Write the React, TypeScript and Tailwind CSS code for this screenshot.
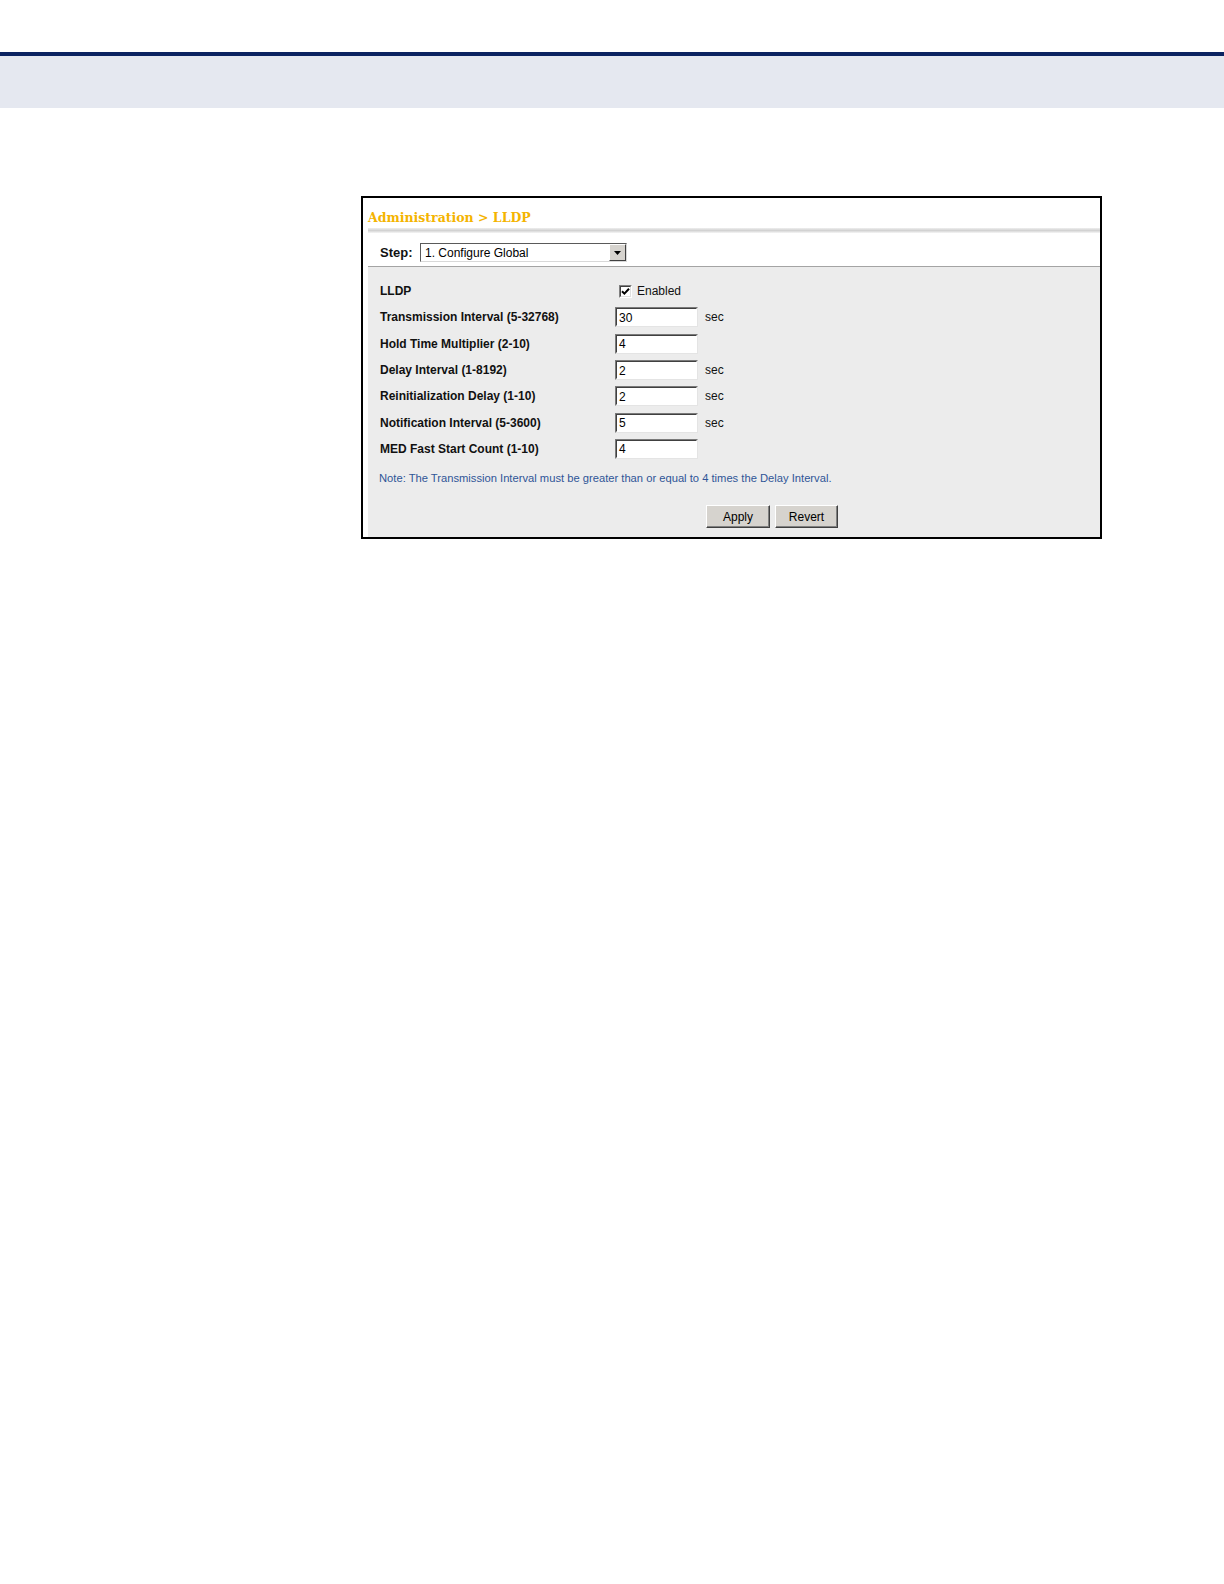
const rows: { label: string; value?: string; unit?: string }[] = [
  { label: "Transmission Interval (5-32768)", value: "30", unit: "sec" },
  { label: "Hold Time Multiplier (2-10)", value: "4" },
  { label: "Delay Interval (1-8192)", value: "2", unit: "sec" },
  { label: "Reinitialization Delay (1-10)", value: "2", unit: "sec" },
  { label: "Notification Interval (5-3600)", value: "5", unit: "sec" },
  { label: "MED Fast Start Count (1-10)", value: "4" },
];

function Field({ value }: { value: string }) {
  // classic inset text box
  return (
    <div className="w-[83px] h-[20px] bg-white border border-t-[#7a7a7a] border-l-[#7a7a7a] border-b-[#e4e4e4] border-r-[#e4e4e4] flex items-center">
      <div className="w-full h-full border border-t-[#404040] border-l-[#404040] border-b-white border-r-white flex items-center pl-[2px] pt-px text-[12px] text-black leading-none">
        {value}
      </div>
    </div>
  );
}

function Btn({ children, w }: { children: string; w: string }) {
  return (
    <button
      className={`${w} h-[23px] bg-[#d6d3ce] border border-t-white border-l-white border-b-[#404040] border-r-[#404040] text-[12px] text-black leading-none shadow-[inset_-1px_-1px_0_#808080]`}
    >
      {children}
    </button>
  );
}

export default function App() {
  return (
    <div className="min-h-[1584px] w-[1224px] bg-white font-['Liberation_Sans',Arial,sans-serif]">
      {/* header band */}
      <div className="h-[52px]" />
      <div className="h-[4px] bg-[#0b2361]" />
      <div className="h-[52px] bg-[#e5e8f0]" />

      {/* screenshot frame */}
      <div className="mt-[88px] ml-[361px] w-[741px] h-[343px] border-2 border-black bg-white pl-[5px] flex flex-col">
        <div className="h-[30px] flex items-center pt-[10px]">
          <span className="font-['DejaVu_Serif',serif] font-bold text-[12.5px] text-[#f4b400]">
            Administration &gt; LLDP
          </span>
        </div>
        <div className="h-[5px] bg-gradient-to-b from-[#eeeeee] via-[#d2d2d2] to-[#f6f6f6]" />

        {/* step selector */}
        <div className="h-[33px] flex items-center pl-[12px] pt-[6px]">
          <span className="text-[13px] font-bold text-[#111] w-[40px]">Step:</span>
          <div className="w-[207px] h-[19px] border border-t-[#5a5a5a] border-l-[#5a5a5a] border-b-[#d8d8d8] border-r-[#d8d8d8] bg-white flex items-center">
            <span className="flex-1 pl-[4px] text-[12px] text-black leading-none">1. Configure Global</span>
            <div className="w-[17px] h-[17px] bg-[#d6d3ce] border border-t-white border-l-white border-b-[#404040] border-r-[#404040] flex items-center justify-center">
              <svg width="7" height="4" viewBox="0 0 7 4">
                <path d="M0 0h7L3.5 4z" fill="#000" />
              </svg>
            </div>
          </div>
        </div>
        <div className="h-px bg-[#a4a4a4]" />

        {/* form body */}
        <div className="flex-1 bg-[#ececec] pl-[12px] pt-[11px] flex flex-col">
          <div className="h-[26.3px] flex items-center">
            <span className="w-[235px] text-[12px] font-bold text-[#111]">LLDP</span>
            <div className="ml-[4px] w-[13px] h-[13px] bg-white border border-t-[#808080] border-l-[#808080] border-b-white border-r-white">
              <div className="w-full h-full border border-t-[#404040] border-l-[#404040] border-b-[#e0e0e0] border-r-[#e0e0e0] flex items-center justify-center">
                <svg width="9" height="9" viewBox="0 0 9 9">
                  <path d="M1 4.2L3.4 6.6L8 1.8" stroke="#000" strokeWidth="2" fill="none" />
                </svg>
              </div>
            </div>
            <span className="ml-[5px] text-[12px] text-[#111]">Enabled</span>
          </div>

          {rows.map((r) => (
            <div key={r.label} className="h-[26.3px] flex items-center">
              <span className="w-[235px] text-[12px] font-bold text-[#111]">{r.label}</span>
              <Field value={r.value ?? ""} />
              {r.unit && <span className="ml-[7px] text-[12px] text-[#111]">{r.unit}</span>}
            </div>
          ))}

          <p className="mt-[8px] -ml-px h-[16px] leading-[16px] text-[11.2px] text-[#2f5597]">
            Note: The Transmission Interval must be greater than or equal to 4 times the Delay Interval.
          </p>

          <div className="mt-[19px] ml-[326px] flex gap-[5px]">
            <Btn w="w-[64px]">Apply</Btn>
            <Btn w="w-[63px]">Revert</Btn>
          </div>
        </div>
      </div>
    </div>
  );
}
